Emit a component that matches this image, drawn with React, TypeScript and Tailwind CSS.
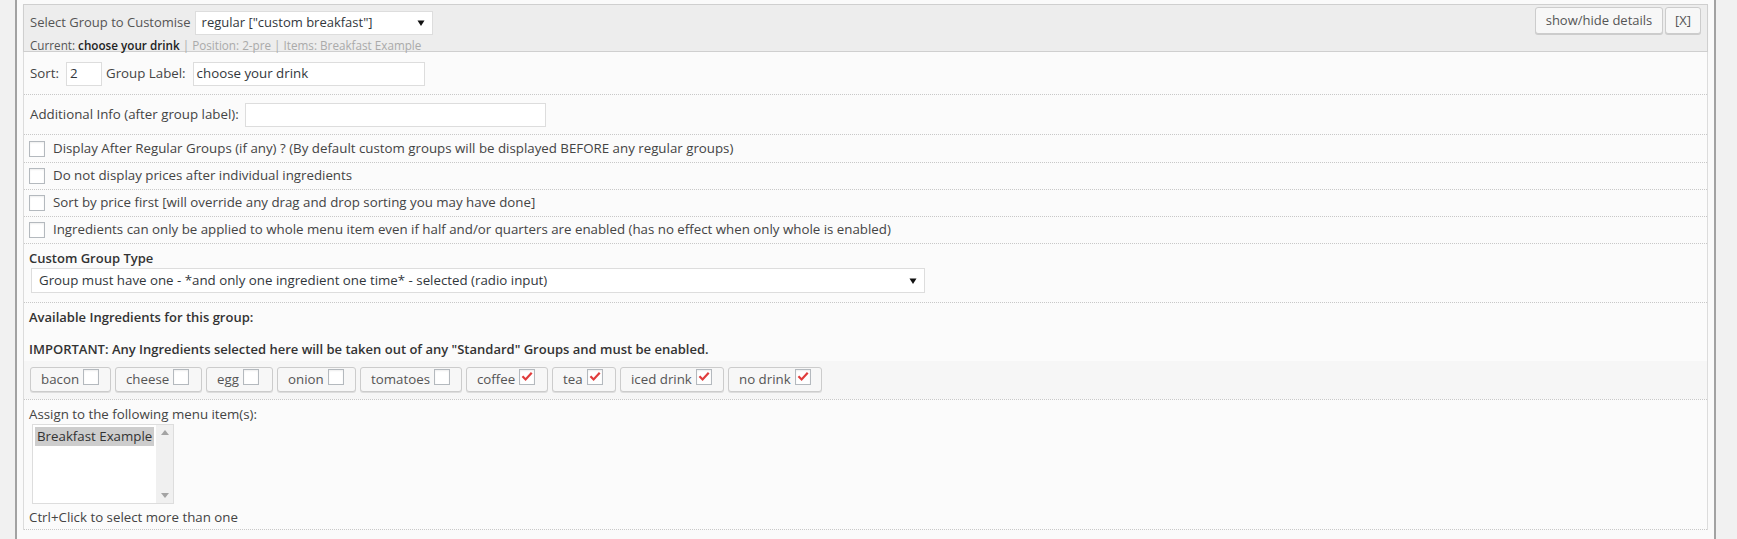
import React from "react";

const Check = ({ checked }: { checked?: boolean }) => (
  <span className="inline-flex h-[16px] w-[16px] shrink-0 items-center justify-center border border-[#b4b9be] bg-white shadow-[inset_0_1px_2px_rgba(0,0,0,0.07)]">
    {checked && (
      <svg width="15" height="15" viewBox="0 0 16 16" className="block">
        <path d="M2.8 7.6 L6.4 11.4 L13.4 3.6" fill="none" stroke="#e03c3c" strokeWidth="2.5" strokeLinecap="butt" strokeLinejoin="miter" />
      </svg>
    )}
  </span>
);

const Arrow = () => (
  <svg width="8" height="8" viewBox="0 0 8 8" className="block">
    <path d="M0.5 1.5 L7.5 1.5 L4 7 Z" fill="#111" />
  </svg>
);

const checkRows = [
  "Display After Regular Groups (if any) ? (By default custom groups will be displayed BEFORE any regular groups)",
  "Do not display prices after individual ingredients",
  "Sort by price first [will override any drag and drop sorting you may have done]",
  "Ingredients can only be applied to whole menu item even if half and/or quarters are enabled (has no effect when only whole is enabled)",
];

const ingredients: { name: string; w: number; checked: boolean }[] = [
  { name: "bacon", w: 81, checked: false },
  { name: "cheese", w: 87, checked: false },
  { name: "egg", w: 67, checked: false },
  { name: "onion", w: 79, checked: false },
  { name: "tomatoes", w: 102, checked: false },
  { name: "coffee", w: 82, checked: true },
  { name: "tea", w: 64, checked: true },
  { name: "iced drink", w: 104, checked: true },
  { name: "no drink", w: 94, checked: true },
];

export default function App() {
  return (
    <div className="h-[539px] w-[1737px] overflow-hidden bg-[#f1f1f1] font-['Open_Sans',sans-serif] text-[13px] text-[#444]">
      <div className="ml-[15px] h-full w-[1701px] border-x-2 border-[#a2a2a2] bg-[#fafafa] px-[6px] pt-[4px]">
        {/* header */}
        <div className="flex h-[48px] flex-col border border-[#cfcfcf] bg-[#ededed] px-[6px] shadow-[0_1px_1px_rgba(0,0,0,0.06)]">
          <div className="flex items-start">
            <span className="mt-[8px] leading-[18px] text-[#555]">Select Group to Customise</span>
            <div className="ml-[4px] mt-[6px] flex h-[24px] w-[238px] items-center justify-between border border-[#ddd] bg-white pl-[6px] pr-[7px] text-[#32373c]">
              <span>regular ["custom breakfast"]</span>
              <Arrow />
            </div>
            <div className="ml-auto mt-[2px] flex gap-[2px]">
              <div className="flex h-[27px] w-[128px] items-center justify-center rounded-[3px] border border-[#ccc] bg-[#f7f7f7] text-[#555] shadow-[0_1px_0_#ccc]">
                show/hide details
              </div>
              <div className="flex h-[27px] w-[36px] items-center justify-center rounded-[3px] border border-[#ccc] bg-[#f7f7f7] text-[#555] shadow-[0_1px_0_#ccc]">
                [X]
              </div>
            </div>
          </div>
          <div className="mt-[4px] whitespace-nowrap text-[11.7px] leading-[13px] text-[#555]">
            Current: <span className="font-semibold text-[#222]">choose your drink</span>
            <span className="text-[#aaa]"> | Position: 2-pre | Items: Breakfast Example</span>
          </div>
        </div>

        {/* body */}
        <div className="border-x border-[#dcdcdc] bg-[#fbfbfb] text-[13.3px]">
          <div className="flex h-[43px] items-center whitespace-nowrap border-b border-dotted border-[#c8c8c8] pl-[6px] pt-[2px]">
            <span>Sort:</span>
            <div className="ml-[7px] flex h-[24px] w-[36px] shrink-0 items-center border border-[#ddd] bg-white px-[3px] text-[#32373c]">2</div>
            <span className="ml-[4px] shrink-0">Group Label:</span>
            <div className="ml-[7px] flex h-[24px] w-[232px] shrink-0 items-center border border-[#ddd] bg-white px-[3px] text-[#32373c]">choose your drink</div>
          </div>
          <div className="flex h-[40px] items-center whitespace-nowrap border-b border-dotted border-[#c8c8c8] pl-[6px] pt-[1px]">
            <span>Additional Info (after group label):</span>
            <div className="ml-[6px] h-[24px] w-[301px] shrink-0 border border-[#ddd] bg-white" />
          </div>
          {checkRows.map((t, i) => (
            <div
              key={i}
              className={`flex ${i === 0 ? "h-[28px]" : "h-[27px]"} items-center border-b border-dotted border-[#c8c8c8] pl-[5px]`}
            >
              <Check />
              <span className="ml-[8px] whitespace-nowrap">{t}</span>
            </div>
          ))}
          <div className="flex h-[59px] flex-col border-b border-dotted border-[#c8c8c8] pl-[5px] pt-[5px] text-[13px]">
            <span className="font-semibold leading-[18px] text-[#333]">Custom Group Type</span>
            <div className="ml-[2px] mt-[1px] flex h-[25px] w-[894px] items-center justify-between border border-[#ddd] bg-white pl-[7px] pr-[7px] text-[13.3px] text-[#32373c]">
              <span>Group must have one - *and only one ingredient one time* - selected (radio input)</span>
              <Arrow />
            </div>
          </div>
          <div className="flex h-[97px] flex-col border-b border-dotted border-[#c8c8c8] pt-[5px] text-[13px]">
            <span className="pl-[5px] font-semibold leading-[18px] text-[#333]">Available Ingredients for this group:</span>
            <span className="mt-[14px] pl-[5px] font-semibold leading-[18px] text-[#333]">
              IMPORTANT: Any Ingredients selected here will be taken out of any "Standard" Groups and must be enabled.
            </span>
            <div className="mt-[3px] flex flex-1 items-start gap-[4px] bg-[#f6f6f6] pl-[6px] pt-[6px]">
              {ingredients.map((ing) => (
                <div
                  key={ing.name}
                  style={{ width: ing.w }}
                  className="flex h-[25px] items-center rounded-[3px] border border-[#ccc] bg-[#f7f7f7] pl-[10px] text-[13.3px] text-[#555] shadow-[0_1px_0_#ddd]"
                >
                  <span className="whitespace-nowrap">{ing.name}</span>
                  <span className="ml-[4px]">
                    <Check checked={ing.checked} />
                  </span>
                </div>
              ))}
            </div>
          </div>
          <div className="flex h-[130px] flex-col border-b border-dotted border-[#c8c8c8] pl-[5px] pt-[5px]">
            <span className="leading-[18px]">Assign to the following menu item(s):</span>
            <div className="ml-[3px] mt-[1px] flex h-[80px] w-[142px] border border-[#ddd] bg-white">
              <div className="flex-1 p-[2px]">
                <div className="flex h-[19px] items-center bg-[#cdcdcd] pl-[2px] text-[#333]">Breakfast Example</div>
              </div>
              <div className="flex w-[17px] flex-col items-center justify-between bg-[#f0f0f0] py-[5px]">
                <svg width="8" height="5" viewBox="0 0 8 5"><path d="M0 5 L4 0 L8 5 Z" fill="#a3a3a3" /></svg>
                <svg width="8" height="5" viewBox="0 0 8 5"><path d="M0 0 L4 5 L8 0 Z" fill="#a3a3a3" /></svg>
              </div>
            </div>
            <span className="mt-[4px] leading-[18px]">Ctrl+Click to select more than one</span>
          </div>
        </div>
      </div>
    </div>
  );
}
